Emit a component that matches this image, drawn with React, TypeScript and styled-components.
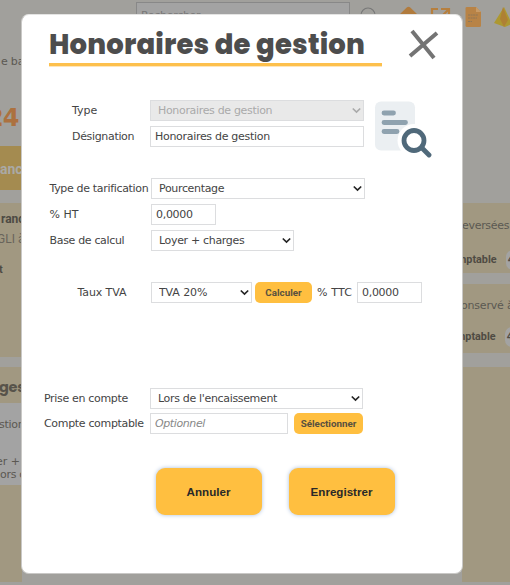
import React from "react";
import styled, { createGlobalStyle } from "styled-components";

const verdana = `Verdana, "DejaVu Sans", sans-serif`;

const GlobalStyle = createGlobalStyle`
  *, *::before, *::after { box-sizing: border-box; }
  body { margin: 0; overflow: hidden; }
`;

const Screen = styled.div`
  position: relative;
  width: 510px;
  height: 585px;
  overflow: hidden;
  background: #a1a09c;
  color: #595753;
  font: 11px ${verdana};
`;

/* Dimmed page under the dialog */
const TopBar = styled.div`
  display: flex;
  height: 40px;
`;

const Search = styled.div`
  width: 214px;
  height: 24px;
  margin: 2px 0 0 136px;
  padding: 6px 4px;
  border: 1px solid #888;
  background: #a3a3a3;
  color: #777;
  letter-spacing: -0.3px;
`;

const TopIcons = styled.svg`
  flex: none;
  width: 160px;
  height: 32px;
`;

const Columns = styled.div`
  display: flex;
  justify-content: space-between;
  height: 545px;
`;

const Column = styled.div<{ $width: number }>`
  width: ${(p) => p.$width}px;
  overflow: hidden;
  white-space: nowrap;
`;

const Band = styled.div<{ $h: number; $bg?: string; $gap?: number }>`
  height: ${(p) => p.$h}px;
  margin-bottom: ${(p) => p.$gap ?? 0}px;
  overflow: hidden;
  background: ${(p) => p.$bg ?? "transparent"};
`;

const Line = styled.div<{ $top?: number; $left?: number; $size?: number; $lh?: number; $color?: string; $bold?: boolean; $font?: string; $spacing?: number }>`
  display: flex;
  margin: ${(p) => p.$top ?? 0}px 0 0 ${(p) => p.$left ?? 0}px;
  font-family: ${(p) => p.$font ?? verdana};
  font-size: ${(p) => p.$size ?? 11}px;
  font-weight: ${(p) => (p.$bold ? 700 : 400)};
  line-height: ${(p) => p.$lh ?? 14}px;
  letter-spacing: ${(p) => p.$spacing ?? 0}px;
  white-space: pre;
  color: ${(p) => p.$color ?? "#5b5852"};
`;

const Pill = styled.span`
  flex: none;
  width: 40px;
  height: 20px;
  margin: -3px 0 0 9px;
  padding: 3px 2px;
  border-radius: 7px;
  background: #a3a3a3;
`;

/* Dialog */
const Dialog = styled.section`
  position: absolute;
  left: 21px;
  top: 14px;
  width: 442px;
  height: 560px;
  border: 1px solid #c9c8c6;
  border-top-color: #e4e4e3;
  border-radius: 8px;
  background: #fff;
  color: #444;
`;

const Header = styled.header`
  display: flex;
  justify-content: space-between;
  height: 85px;
  padding: 14px 23px 0 27px;
`;

const Title = styled.h1`
  width: 333px;
  height: 37px;
  margin: 0;
  border-bottom: 3px solid #fdc04c;
  box-shadow: 0 1px 0 #fee6bb;
  font: 800 27.5px/31px Poppins, Inter, sans-serif;
  letter-spacing: 0.17px;
  white-space: nowrap;
  color: #4d4d4d;
`;

const CloseButton = styled.button`
  width: 32px;
  height: 32px;
  padding: 0;
  border: 0;
  background: none;
  svg { display: block; }
`;

const Top = styled.div`
  display: flex;
  height: 78px;
`;

const Rows = styled.div`
  flex: none;
`;

const Row = styled.div<{ $indent: number; $label: number; $h?: number }>`
  display: flex;
  align-items: flex-start;
  height: ${(p) => p.$h ?? 26}px;
  padding-left: ${(p) => p.$indent}px;
  > label:first-child { width: ${(p) => p.$label}px; }
`;

const Label = styled.label<{ $spacing?: number }>`
  flex: none;
  line-height: 22px;
  letter-spacing: ${(p) => p.$spacing ?? -0.33}px;
  white-space: nowrap;
`;

const Field = styled.input<{ $w: number }>`
  width: ${(p) => p.$w}px;
  height: 21px;
  margin: 0;
  padding: 0 4px;
  border: 1px solid #dcdddf;
  border-radius: 0;
  outline: 0;
  background: #fff;
  color: #444;
  font: 11px ${verdana};
  letter-spacing: -0.3px;
  &::placeholder { color: #888; font-style: italic; opacity: 1; letter-spacing: -0.4px; }
`;

const SelectBox = styled.div<{ $w: number }>`
  display: grid;
  width: ${(p) => p.$w}px;
  height: 21px;
  > * { grid-area: 1 / 1; }
  svg { align-self: center; justify-self: end; margin-right: 3px; pointer-events: none; }
`;

const Select = styled.select<{ $spacing: number }>`
  appearance: none;
  width: 100%;
  height: 21px;
  padding: 0 7px;
  border: 1px solid #dcdddf;
  border-radius: 0;
  background: #fff;
  color: #444;
  font: 11px ${verdana};
  letter-spacing: ${(p) => p.$spacing}px;
  opacity: 1;
  &:disabled { background: #e9e9e9; color: #aaa; }
`;

const SmallButton = styled.button<{ $w: number; $ml: number }>`
  width: ${(p) => p.$w}px;
  height: 21px;
  margin-left: ${(p) => p.$ml}px;
  padding: 0;
  border: 0;
  border-radius: 5px;
  background: #ffbf40;
  color: #59513f;
  font: 700 9.8px Roboto, sans-serif;
  white-space: nowrap;
`;

const Actions = styled.footer`
  display: flex;
  gap: 27px;
  padding: 28.5px 0 0 133.5px;
`;

const ActionButton = styled.button`
  width: 106px;
  height: 47px;
  padding: 0;
  border: 0;
  border-radius: 9px;
  background: #ffbf40;
  box-shadow: 0 0 4px #a9bedb;
  color: #292929;
  font: 700 11.6px/45px "Liberation Sans", Arial, sans-serif;
`;

const DocIcon = styled.svg`
  margin: 1px 0 0 10px;
`;

function Dropdown({ text, w, disabled = false, spacing = -0.33 }: { text: string; w: number; disabled?: boolean; spacing?: number }) {
  return (
    <SelectBox $w={w}>
      <Select disabled={disabled} defaultValue={text} $spacing={spacing}>
        <option>{text}</option>
      </Select>
      <svg width="9" height="7" viewBox="0 0 9 7" fill="none" stroke={disabled ? "#aaa" : "#252525"} strokeWidth="1.7">
        <path d="M.8 1.5 4.5 5 8.2 1.5" />
      </svg>
    </SelectBox>
  );
}

const tan = "#a19881";
const roboto = "Roboto, sans-serif";

function Backdrop() {
  return (
    <>
      <TopBar>
        <Search>Rechercher</Search>
        <TopIcons viewBox="350 0 160 32">
          <circle cx="368" cy="15" r="7" fill="none" stroke="#777" strokeWidth="1.2" />
          <path d="M399 15 407 7.3Q408.500 6 410 7.300L418 15Z" fill="#b17b3d" />
          <path d="M438 9H432V26H449V20M441 9H449V17M449 9 440 18" fill="none" stroke="#b67f3e" strokeWidth="2.2" />
          <path d="M465.500 8Q465.500 7 467 7H476L481 12V25.500Q481 27 479.500 27H467Q465.500 27 465.500 25.500Z" fill="#b88346" />
          <path d="M476 7V12H481Z" fill="#c99b66" />
          <path d="M468 15H478M468 18H477M468 21.500H472" stroke="#8e7657" strokeDasharray="2 .6" />
          <path d="M504 7 512 24 505 27 494 23Z" fill="#ad9831" />
          <path d="M503 7 508 20 504 27 500 19Z" fill="#ae8034" />
        </TopIcons>
      </TopBar>
      <Columns>
        <Column $width={22}>
          <Band $h={106}>
            <Line $top={15} $left={1} $spacing={-0.2}>e ba</Line>
            <Line $top={37} $left={-13} $size={24} $lh={24} $spacing={-1} $bold $color="#ac713f">24</Line>
          </Band>
          <Band $h={44} $bg="#a48b50" $gap={13}>
            <Line $top={14} $size={14} $lh={18} $bold $color="#aaa9a6" $font={roboto}>anc</Line>
          </Band>
          <Band $h={154} $bg={tan} $gap={10}>
            <Line $top={9} $left={1} $size={12} $bold $color="#4d4a43" $font={roboto}>ranc</Line>
            <Line $top={6} $left={-3} $size={12} $color="#68645b" $font={roboto}>GLI à</Line>
            <Line $top={17} $left={-1} $size={11} $bold $color="#4d4a43" $font={roboto}>t</Line>
          </Band>
          <Band $h={36} $bg={tan}>
            <Line $top={10} $left={-1} $size={14.5} $lh={20} $spacing={-0.3} $bold $color="#57534a" $font="Poppins, Inter, sans-serif">ges</Line>
          </Band>
          <Band $h={82} $bg="#a3a3a3">
            <Line $top={15} $left={-1} $spacing={-0.3}>stion</Line>
            <Line $top={23} $left={-4}>er +</Line>
            <Line $top={-1} $left={0} $spacing={-0.3}>ors c</Line>
          </Band>
          <Band $h={97} $bg={tan} />
        </Column>
        <Column $width={48}>
          <Band $h={163} />
          <Band $h={70} $bg={tan} $gap={11}>
            <Line $top={16} $left={0} $spacing={-0.3}>eversées</Line>
            <Line $top={20} $left={-5} $bold $size={10.8} $color="#4f4b43" $font={roboto}>mptable<Pill>4</Pill></Line>
          </Band>
          <Band $h={69} $bg={tan} $gap={14}>
            <Line $top={15} $left={-1} $spacing={-0.2}>onservé à</Line>
            <Line $top={17} $left={-6} $bold $size={10.8} $color="#4f4b43" $font={roboto}>mptable<Pill>4</Pill></Line>
          </Band>
          <Band $h={215} $bg={tan} />
        </Column>
      </Columns>
    </>
  );
}

export default function App() {
  return (
    <Screen>
      <GlobalStyle />
      <Backdrop />
      <Dialog role="dialog">
        <Header>
          <Title>Honoraires de gestion</Title>
          <CloseButton aria-label="Fermer">
            <svg width="32" height="32" viewBox="0 0 32 32" fill="none" stroke="#747474" strokeWidth="4">
              <path d="M5 2 27 29M30 4 3 27" />
            </svg>
          </CloseButton>
        </Header>
        <Top>
          <Rows>
            <Row $indent={50} $label={78}>
              <Label $spacing={0}>Type</Label>
              <Dropdown text="Honoraires de gestion" w={214} disabled />
            </Row>
            <Row $indent={50} $label={78}>
              <Label>Désignation</Label>
              <Field $w={214} defaultValue="Honoraires de gestion" />
            </Row>
          </Rows>
          <DocIcon width="58" height="58" viewBox="374 101 58 58">
            <rect x="375" y="101.500" width="40" height="49" rx="6" fill="#ebeff2" />
            <path d="M384 113H393.500M384 122.500H405.500M384 131.500H397" stroke="#8fa2af" strokeWidth="4.800" strokeLinecap="round" />
            <circle cx="414" cy="140.500" r="16.500" fill="#fff" />
            <circle cx="414" cy="140.500" r="10" fill="#fff" stroke="#50697a" strokeWidth="4.800" />
            <path d="M422 148 429 155" stroke="#50697a" strokeWidth="4.800" strokeLinecap="round" />
          </DocIcon>
        </Top>
        <Row $indent={27.5} $label={101.5}>
          <Label>Type de tarification</Label>
          <Dropdown text="Pourcentage" w={214} />
        </Row>
        <Row $indent={27.5} $label={101.5}>
          <Label $spacing={0}>% HT</Label>
          <Field $w={65} defaultValue="0,0000" />
        </Row>
        <Row $indent={27.5} $label={101.5} $h={52}>
          <Label>Base de calcul</Label>
          <Dropdown text="Loyer + charges" w={143} />
        </Row>
        <Row $indent={55.5} $label={73.5} $h={106}>
          <Label $spacing={-0.1}>Taux TVA</Label>
          <Dropdown text="TVA 20%" w={101} spacing={-0.1} />
          <SmallButton $w={57} $ml={3}>Calculer</SmallButton>
          <Row $indent={5} $label={40} $h={22}>
            <Label $spacing={0.15}>% TTC</Label>
            <Field $w={65} defaultValue="0,0000" />
          </Row>
        </Row>
        <Row $indent={22} $label={106} $h={25}>
          <Label>Prise en compte</Label>
          <Dropdown text="Lors de l'encaissement" w={213} />
        </Row>
        <Row $indent={22} $label={106}>
          <Label>Compte comptable</Label>
          <Field $w={138} placeholder="Optionnel" />
          <SmallButton $w={69} $ml={6}>Sélectionner</SmallButton>
        </Row>
        <Actions>
          <ActionButton>Annuler</ActionButton>
          <ActionButton>Enregistrer</ActionButton>
        </Actions>
      </Dialog>
    </Screen>
  );
}
